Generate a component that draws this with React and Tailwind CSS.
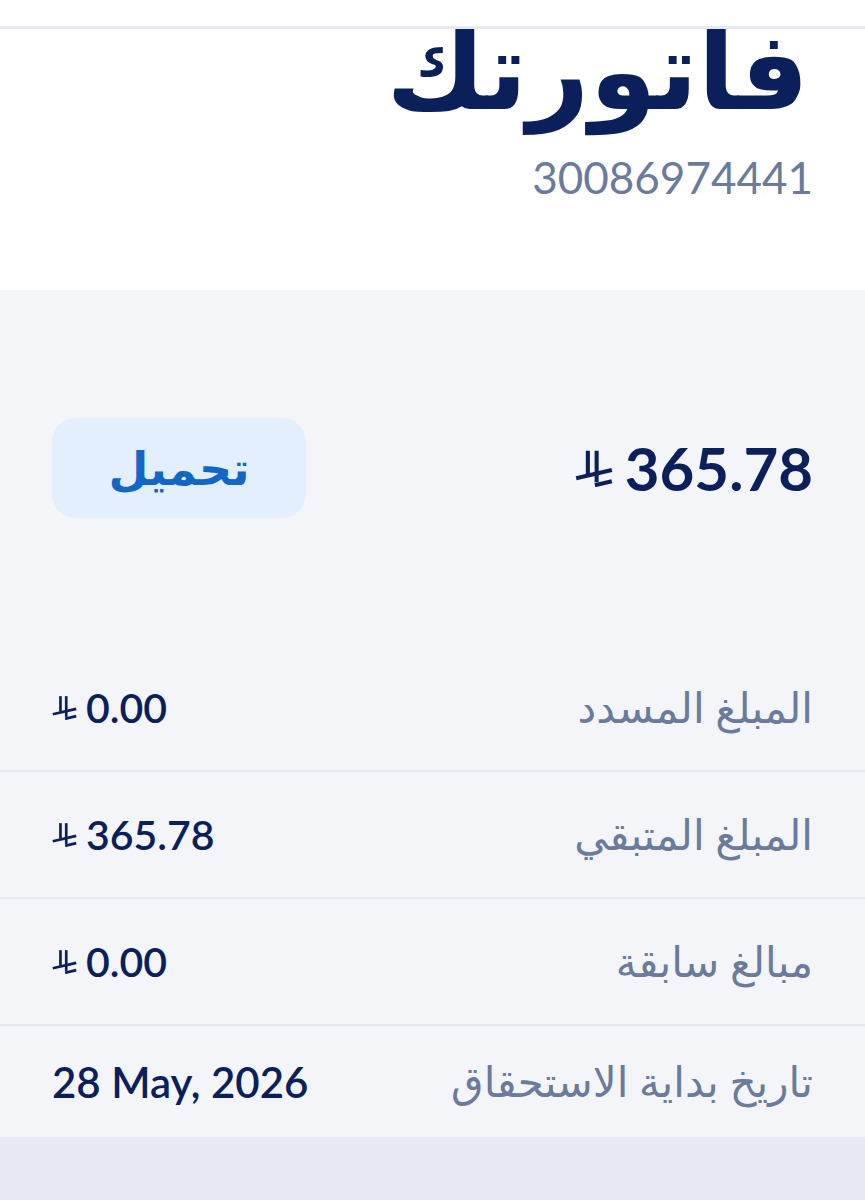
import React from 'react';

const font = { fontFamily: "Lato, 'DejaVu Sans', sans-serif" };

// Saudi riyal sign, drawn since no installed font carries it
const Riyal = ({ className }) => (
  <svg viewBox="4 6 130 130" className={className} fill="none" stroke="currentColor" strokeWidth="14">
    <path d="M48 12 V92" />
    <path d="M78 12 V120" />
    <path d="M8 106 L130 78" />
    <path d="M72 130 L130 116" />
  </svg>
);

const Money = ({ value, big }) => (
  <div dir="ltr" className={`flex items-center text-[#0b1f5b] ${big ? 'gap-[12px]' : 'gap-[9px]'}`}>
    <Riyal className={big ? 'w-[38px] h-[38px]' : 'w-[25px] h-[25px]'} />
    <span className={big ? 'text-[60px] font-bold leading-none' : 'text-[41px] font-semibold leading-none'}>{value}</span>
  </div>
);

const rows = [
  { label: 'المبلغ المسدد', value: '0.00' },
  { label: 'المبلغ المتبقي', value: '365.78' },
  { label: 'مبالغ سابقة', value: '0.00' },
  { label: 'تاريخ بداية الاستحقاق', date: '28 May, 2026' },
];

export default function App() {
  return (
    <div dir="rtl" style={font} className="w-[865px] h-[1200px] bg-[#e6e9f1] overflow-hidden">
      {/* top bar */}
      <div className="h-[29px] bg-white border-b-[3px] border-[#e6eaf2]" />

      {/* title */}
      <div className="h-[261px] bg-white overflow-hidden px-[52px]">
        <h1 className="text-[108px] font-bold leading-none text-[#0b1f5b] -mt-[16px] pr-[4px]">فاتورتك</h1>
        <p className="text-[44px] leading-none text-[#6b7b9b] mt-[34px]">30086974441</p>
      </div>

      {/* details */}
      <div className="bg-[#f3f5f9]">
        <div className="h-[355px] px-[52px] flex items-center justify-between">
          <Money value="365.78" big />
          <button className="w-[254px] h-[100px] rounded-[24px] bg-[#e3effd] text-[#1466c5] text-[46px] font-bold">
            تحميل
          </button>
        </div>

        {rows.map((row, i) => (
          <div
            key={row.label}
            className={`px-[52px] flex items-center justify-between ${
              i < rows.length - 1 ? 'h-[127px] border-b-2 border-[#e4e8ef]' : 'h-[111px]'
            }`}
          >
            <span className="text-[42px] text-[#6b7b9b]">{row.label}</span>
            {row.date ? (
              <span dir="ltr" className="text-[42px] font-semibold text-[#0b1f5b] leading-none">{row.date}</span>
            ) : (
              <Money value={row.value} />
            )}
          </div>
        ))}
      </div>
    </div>
  );
}
